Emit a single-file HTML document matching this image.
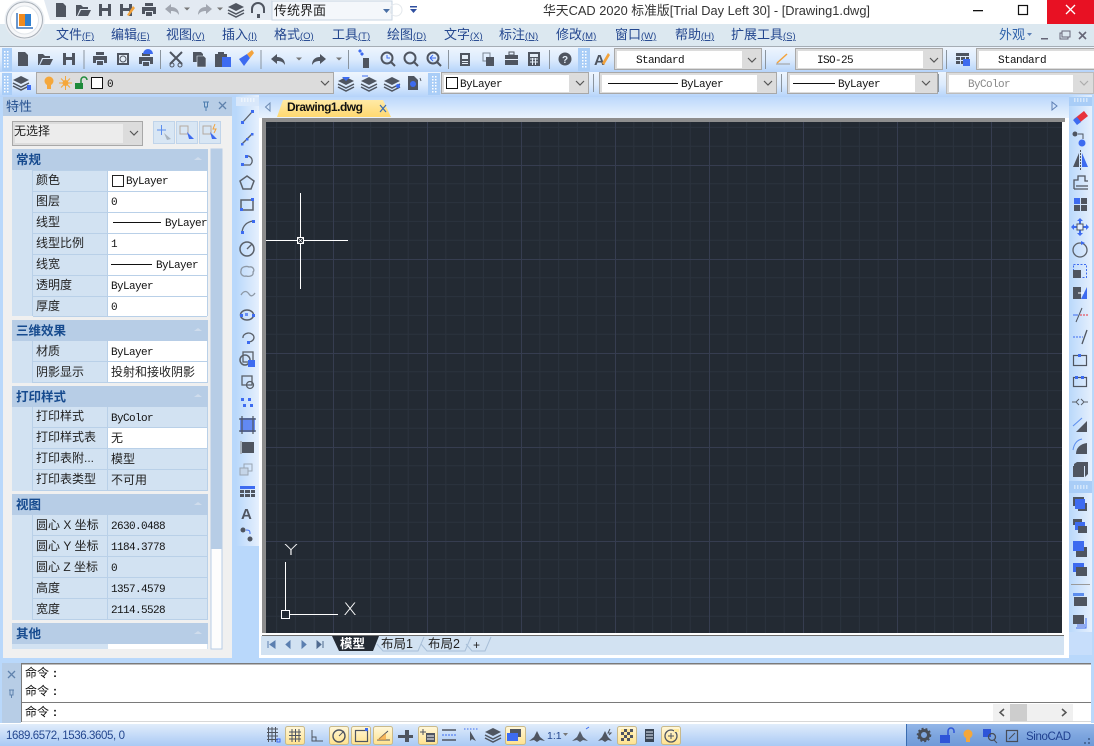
<!DOCTYPE html>
<html><head><meta charset="utf-8"><style>
html,body{margin:0;padding:0;width:1094px;height:746px;overflow:hidden;background:#b9d8fb}
svg{display:block}
text{font-family:"Liberation Sans","Noto Sans CJK SC",sans-serif;white-space:pre}
.m{font-family:"Liberation Mono","Noto Sans CJK SC",monospace;font-size:11px;letter-spacing:-.6px;fill:#111}
.c{font-size:12px;fill:#222}
.h{font-size:12.5px;font-weight:700;fill:#164a8e}
.n{font-size:13px;fill:#24478f}
.k{font-size:9.5px;fill:#24478f;text-decoration:underline}
.i{fill:#4f5560}
.b{fill:#3d6bf0}
.l{fill:none;stroke:#4f5560;stroke-width:1.5}
.bl{fill:none;stroke:#3d6bf0;stroke-width:1}
.u{font-family:"DejaVu Sans","Liberation Sans",sans-serif;font-weight:200;fill:#fff}
</style></head><body>
<svg width="1094" height="746" viewBox="0 0 1094 746" xmlns="http://www.w3.org/2000/svg">
<defs>
<linearGradient id="tb" x1="0" y1="0" x2="0" y2="1"><stop offset="0" stop-color="#eef5fd"/><stop offset=".5" stop-color="#dcebfd"/><stop offset="1" stop-color="#b5d3fa"/></linearGradient>
<linearGradient id="tr" x1="0" y1="0" x2="0" y2="1"><stop offset="0" stop-color="#bcd8fb"/><stop offset="1" stop-color="#eaf3fd"/></linearGradient>
<linearGradient id="vt" x1="0" y1="0" x2="1" y2="0"><stop offset="0" stop-color="#b9d8fb"/><stop offset="1" stop-color="#e6f0fd"/></linearGradient>
<linearGradient id="st" x1="0" y1="0" x2="0" y2="1"><stop offset="0" stop-color="#e3eefb"/><stop offset=".5" stop-color="#c6dcf8"/><stop offset="1" stop-color="#a9c9f4"/></linearGradient>
<linearGradient id="st2" x1="0" y1="0" x2="0" y2="1"><stop offset="0" stop-color="#94b7e8"/><stop offset=".5" stop-color="#7ea6df"/><stop offset="1" stop-color="#6f9ad8"/></linearGradient>
<linearGradient id="yb" x1="0" y1="0" x2="0" y2="1"><stop offset="0" stop-color="#fff8dc"/><stop offset="1" stop-color="#ffe28c"/></linearGradient>
<linearGradient id="tab" x1="0" y1="0" x2="0" y2="1"><stop offset="0" stop-color="#ffeaa6"/><stop offset="1" stop-color="#ffd970"/></linearGradient>
<pattern id="grid" patternUnits="userSpaceOnUse" x="333" y="165" width="94" height="94">
<path d="M18.8 0V94M37.6 0V94M56.4 0V94M75.2 0V94M0 18.8H94M0 37.6H94M0 56.4H94M0 75.2H94" stroke="#2b333e" stroke-width="1" fill="none"/>
<path d="M.5 0V94M0 .5H94" stroke="#363d50" stroke-width="1" fill="none"/>
</pattern>
<g id="file"><path class="i" d="M-5-7H2L5-4V7H-5Z"/></g>
<g id="open"><path class="i" d="M-7 6V-5H-2L0-3H5V-1H-3L-6 6ZM-5 6L-2 0H8L5 6Z"/></g>
<g id="save"><path class="i" d="M-6-6H6V6H-6ZM-3-6V-2H3V-6ZM-3 1V6H3V1Z" fill-rule="evenodd"/></g>
<g id="print"><path class="i" d="M-4-7H4V-4H-4ZM-7-3H7V4H4V1H-4V4H-7ZM-3 2H3V6H-3Z"/></g>
<g id="undo"><path class="i" d="M-7-1L-1-6V-3C4-3 7 0 7 5C5 2 3 1-1 1V4Z"/></g>
<g id="redo"><path class="i" d="M7-1L1-6V-3C-4-3-7 0-7 5C-5 2-3 1 1 1V4Z"/></g>
<g id="layers"><path class="i" d="M0-7L8-3L0 1L-8-3Z"/><path class="l" d="M-8 0L0 4L8 0M-8 3L0 7L8 3"/></g>
<path id="chev" d="M-4-2L0 2L4-2" fill="none" stroke="#555" stroke-width="1.2"/>
<path id="tri" d="M-3-1.5H3L0 1.5Z" fill="#777"/>
<g id="grip" fill="#fff"><rect x="-1" y="-8" width="1.5" height="1.5"/><rect x="-1" y="-5" width="1.5" height="1.5"/><rect x="-1" y="-2" width="1.5" height="1.5"/><rect x="-1" y="1" width="1.5" height="1.5"/><rect x="-1" y="4" width="1.5" height="1.5"/><rect x="-1" y="7" width="1.5" height="1.5"/><rect x="2" y="-8" width="1.5" height="1.5"/><rect x="2" y="-5" width="1.5" height="1.5"/><rect x="2" y="-2" width="1.5" height="1.5"/><rect x="2" y="1" width="1.5" height="1.5"/><rect x="2" y="4" width="1.5" height="1.5"/><rect x="2" y="7" width="1.5" height="1.5"/></g>
<g id="hgrip" fill="#fff"><rect x="-7" y="-1.5" width="1.5" height="1"/><rect x="-4" y="-1.5" width="1.5" height="1"/><rect x="-1" y="-1.5" width="1.5" height="1"/><rect x="2" y="-1.5" width="1.5" height="1"/><rect x="5" y="-1.5" width="1.5" height="1"/><rect x="-7" y=".5" width="1.5" height="1"/><rect x="-4" y=".5" width="1.5" height="1"/><rect x="-1" y=".5" width="1.5" height="1"/><rect x="2" y=".5" width="1.5" height="1"/><rect x="5" y=".5" width="1.5" height="1"/></g>
</defs>

<!-- base -->
<rect width="1094" height="746" fill="#b9d8fb"/>
<rect x="0" y="0" width="1094" height="24" fill="#fff"/>
<rect x="0" y="24" width="1094" height="22" fill="#dce8f0"/>
<rect x="0" y="46" width="1094" height="1" fill="#a5adb5"/>
<rect x="0" y="47" width="1094" height="25" fill="url(#tb)"/>
<rect x="0" y="72" width="1094" height="25" fill="url(#tb)"/>

<!-- QAT -->
<path d="M44 0H272V20H50Z" fill="#e3eaf2"/>
<rect x="272" y="1" width="120" height="19" fill="#f4f7fb" stroke="#c6d3e2"/>
<text x="274" y="15" style="font-size:13px;fill:#222">传统界面</text>
<path d="M383 9H390L386.500 13Z" fill="#4a6fa5"/>
<circle cx="396" cy="10" r="6" fill="none" stroke="#e4e8ec"/>
<rect x="410" y="6" width="7" height="1.500" fill="#2f4f9f"/><path d="M410 9H417L413.500 13Z" fill="#2f4f9f"/>
<use href="#file" x="61" y="10"/><use href="#open" x="83" y="10"/><use href="#save" x="105" y="10"/>
<use href="#save" x="126" y="10"/><path d="M127 15L133 6L135 8L129 16Z" fill="#f3a33c"/>
<use href="#print" x="149" y="10"/>
<use href="#undo" x="172" y="10" opacity=".45"/><use href="#tri" x="187" y="9"/>
<use href="#redo" x="205" y="10" opacity=".45"/><use href="#tri" x="220" y="9"/>
<use href="#layers" x="236" y="10"/>
<path d="M252 13V9A6 6 0 0 1 264 9V13" fill="none" stroke="#4f5560" stroke-width="2"/><rect x="257" y="14" width="3" height="4" fill="#4f5560"/>

<!-- logo -->
<circle cx="24.500" cy="20" r="20" fill="#e9edf2"/>
<circle cx="24.500" cy="20" r="18" fill="#f6f7f9" stroke="#a9b0b8"/>
<circle cx="24.500" cy="20" r="14" fill="#fff" stroke="#e1e5ea"/>
<rect x="19" y="14" width="6" height="12" fill="#f08a1d"/><rect x="25" y="14" width="6" height="12" fill="#2f7fd0"/><path d="M17 13V28H33" fill="none" stroke="#3b77bd" stroke-width="1.500"/>

<!-- title -->
<text x="543" y="15" textLength="327" lengthAdjust="spacingAndGlyphs" style="font-size:13px;fill:#333">华天CAD 2020 标准版[Trial Day Left 30] - [Drawing1.dwg]</text>
<rect x="973" y="10" width="10" height="1.300" fill="#111"/>
<rect x="1018.500" y="5.500" width="9" height="9" fill="none" stroke="#111" stroke-width="1.200"/>
<rect x="1047" y="0" width="47" height="24" fill="#e81123"/>
<path d="M1066 5L1075 14M1075 5L1066 14" stroke="#fff" stroke-width="1.300"/>

<!-- menu -->
<text x="56" y="39" class="n">文件</text><text x="82" y="39" class="k">(F)</text>
<text x="111" y="39" class="n">编辑</text><text x="137" y="39" class="k">(E)</text>
<text x="166" y="39" class="n">视图</text><text x="192" y="39" class="k">(V)</text>
<text x="222" y="39" class="n">插入</text><text x="248" y="39" class="k">(I)</text>
<text x="274" y="39" class="n">格式</text><text x="300" y="39" class="k">(O)</text>
<text x="332" y="39" class="n">工具</text><text x="358" y="39" class="k">(T)</text>
<text x="387" y="39" class="n">绘图</text><text x="413" y="39" class="k">(D)</text>
<text x="444" y="39" class="n">文字</text><text x="470" y="39" class="k">(X)</text>
<text x="499" y="39" class="n">标注</text><text x="525" y="39" class="k">(N)</text>
<text x="556" y="39" class="n">修改</text><text x="582" y="39" class="k">(M)</text>
<text x="615" y="39" class="n">窗口</text><text x="641" y="39" class="k">(W)</text>
<text x="675" y="39" class="n">帮助</text><text x="701" y="39" class="k">(H)</text>
<text x="731" y="39" class="n">扩展工具</text><text x="783" y="39" class="k">(S)</text>
<text x="999" y="39" style="font-size:13px;fill:#2f62ab">外观</text><path d="M1027 33H1032L1029.500 36Z" fill="#5a7fb5"/>
<rect x="1041" y="38" width="7" height="1.500" fill="#667"/><rect x="1060" y="33" width="8" height="6" fill="none" stroke="#667"/><rect x="1062" y="31" width="8" height="6" fill="#dce8f0" stroke="#667"/>
<path d="M1079 32L1086 39M1086 32L1079 39" stroke="#667" stroke-width="1.600"/>

<!-- toolbar 1 -->
<rect x="2" y="48" width="10" height="23" fill="#a9cdf7"/><use href="#grip" x="5" y="59" />
<use href="#file" x="23" y="59"/><use href="#open" x="45" y="59"/><use href="#save" x="69" y="59"/>
<rect x="83.500" y="50" width="1" height="19" fill="#8a949e"/>
<use href="#print" x="100" y="59"/>
<rect x="117" y="53" width="12" height="12" fill="#4f5560"/><rect x="119" y="55" width="8" height="8" fill="#e6eff9"/><circle cx="123" cy="59" r="3" fill="none" stroke="#4f5560"/>
<use href="#print" x="146" y="60"/><path d="M143 54A5 5 0 0 1 153 54H143Z" fill="#3d6bf0"/>
<rect x="160" y="50" width="1" height="19" fill="#8a949e"/>
<path d="M170 52L182 64M182 52L170 64" stroke="#4f5560" stroke-width="2"/><circle cx="172" cy="65" r="2" fill="none" stroke="#4f5560"/><circle cx="180" cy="65" r="2" fill="none" stroke="#4f5560"/>
<path class="i" d="M193 52H201L203 54V62H193Z"/><path class="i" d="M197 56H204L206 58V67H197Z" stroke="#e6eff9" stroke-width=".6"/>
<rect x="215" y="54" width="12" height="13" fill="#4f5560"/><rect x="218" y="52" width="6" height="3" fill="#4f5560"/><rect x="222" y="57" width="9" height="10" fill="#3d6bf0"/>
<path d="M239 59L247 54L250 58L244 66Z" fill="#3d6bf0"/><path d="M247 54L252 50L254 53L250 58Z" fill="#f3a33c"/>
<rect x="260.500" y="50" width="1" height="19" fill="#8a949e"/>
<use href="#undo" x="278" y="60"/><use href="#tri" x="299" y="59"/><use href="#redo" x="319" y="60"/><use href="#tri" x="339" y="59"/>
<rect x="348" y="50" width="1" height="19" fill="#8a949e"/>
<path class="i" d="M363 58H369V68H363Z"/><path d="M360 54L362 52L364 54L362 56Z M358 51L360 49L362 51L360 53Z" fill="#3d6bf0"/>
<circle cx="387" cy="58" r="5.500" fill="none" stroke="#4f5560" stroke-width="2"/><path d="M391 62L395 66" stroke="#4f5560" stroke-width="2"/><path d="M387 55V58H390" fill="none" stroke="#3d6bf0"/>
<circle cx="410" cy="58" r="5.500" fill="none" stroke="#4f5560" stroke-width="2"/><path d="M414 62L418 66" stroke="#4f5560" stroke-width="2"/>
<circle cx="433" cy="58" r="5.500" fill="none" stroke="#4f5560" stroke-width="2"/><path d="M437 62L441 66" stroke="#4f5560" stroke-width="2"/><path d="M430 58H436M430 58L433 55M430 58L433 61" stroke="#3d6bf0" fill="none"/>
<rect x="448" y="50" width="1" height="19" fill="#8a949e"/>
<rect x="460" y="53" width="10" height="13" fill="#4f5560"/><rect x="462" y="55" width="6" height="4" fill="#e6eff9"/><rect x="462" y="61" width="6" height="1" fill="#e6eff9"/><rect x="462" y="63" width="6" height="1" fill="#e6eff9"/>
<rect x="483" y="53" width="7" height="8" fill="none" stroke="#7a8592"/><rect x="486" y="57" width="8" height="9" fill="#4f5560"/>
<rect x="505" y="55" width="13" height="10" fill="#4f5560"/><rect x="509" y="52" width="5" height="3" fill="none" stroke="#4f5560"/><rect x="505" y="59" width="13" height="1" fill="#e6eff9"/>
<rect x="528" y="52" width="12" height="14" fill="#4f5560"/><rect x="530" y="54" width="8" height="3" fill="#e6eff9"/><path d="M530 59H538M530 62H538M532.500 58V65M535.500 58V65" stroke="#e6eff9"/>
<rect x="549" y="50" width="1" height="19" fill="#8a949e"/>
<circle cx="565" cy="59" r="6.500" fill="#4f5560"/><text x="562" y="63" style="font-size:10px;font-weight:700;fill:#e6eff9">?</text>
<rect x="578" y="48" width="12" height="23" fill="#a9cdf7"/><use href="#grip" x="583" y="59"/>
<text x="594" y="65" style="font-size:15px;font-weight:700;fill:#4f5560">A</text><path d="M602 63L608 53L610 55L604 65Z" fill="#f3a33c"/>

<!-- combos row 1 -->
<rect x="614.500" y="48.500" width="147" height="21" fill="#dcdcdc" stroke="#a8a8a8"/><rect x="617" y="51" width="125" height="17" fill="#fff"/><use href="#chev" x="752" y="60"/>
<text x="636" y="63" class="m">Standard</text>
<rect x="765" y="50" width="1" height="19" fill="#8a949e"/>
<path d="M776 64H790" stroke="#9a9a9a"/><path d="M777 63L787 54" stroke="#f3a33c" stroke-width="1.500"/>
<rect x="795.500" y="48.500" width="147" height="21" fill="#dcdcdc" stroke="#a8a8a8"/><rect x="798" y="51" width="125" height="17" fill="#fff"/><use href="#chev" x="934" y="60"/>
<text x="817" y="63" class="m">ISO-25</text>
<rect x="946" y="50" width="1" height="19" fill="#8a949e"/>
<rect x="956" y="53" width="13" height="3" fill="#4f5560"/><path d="M956 57H960V60H956ZM961 57H965V60H961ZM966 57H969V60H966ZM956 61H960V64H956ZM961 61H965V64H961Z" fill="#4f5560"/><rect x="963" y="59" width="7" height="7" fill="#3d6bf0"/>
<rect x="976.500" y="48.500" width="118" height="21" fill="#dcdcdc" stroke="#a8a8a8"/><rect x="979" y="51" width="115" height="17" fill="#fff"/>
<text x="998" y="63" class="m">Standard</text>

<!-- toolbar 2 -->
<rect x="2" y="73" width="10" height="22" fill="#a9cdf7"/><use href="#grip" x="5" y="84"/>
<use href="#layers" x="21" y="83"/><rect x="27" y="85" width="4" height="5" fill="#3d6bf0"/>
<rect x="36.500" y="72.500" width="297" height="21" fill="#dcdcdc" stroke="#a8a8a8"/>
<circle cx="49" cy="81" r="4.500" fill="#f5a73a"/><rect x="47" y="85" width="4" height="4" fill="#f5a73a"/>
<circle cx="65.500" cy="83" r="3" fill="#f5a73a"/><path d="M65.500 76V90M59 83H72M61 78.500L70 87.500M70 78.500L61 87.500" stroke="#f5a73a"/>
<rect x="75" y="83" width="8" height="6" fill="#1d8a3a"/><path d="M81 83V80A3 3 0 0 1 87 80" fill="none" stroke="#1d8a3a" stroke-width="1.500"/>
<rect x="91.500" y="77.500" width="11" height="11" fill="#fff" stroke="#111"/>
<text x="107" y="87" class="m">0</text>
<use href="#chev" x="325" y="83"/>
<use href="#layers" x="346" y="84"/><path d="M342 77H350L346 81Z" fill="#3d6bf0"/>
<use href="#layers" x="369" y="84"/><path d="M362 76H368" stroke="#3d6bf0"/>
<use href="#layers" x="392" y="84"/><circle cx="398" cy="86" r="2" fill="#3d6bf0"/>
<path class="i" d="M408 76H414L418 80V90H408Z"/><circle cx="413" cy="84" r="3" fill="#3d6bf0"/><path d="M420 78L421 81" stroke="#4f5560"/>
<rect x="428" y="73" width="12" height="22" fill="#a9cdf7"/><use href="#grip" x="433" y="84"/>
<rect x="441.500" y="72.500" width="147" height="21" fill="#dcdcdc" stroke="#a8a8a8"/><rect x="444" y="75" width="125" height="17" fill="#fff"/>
<rect x="446.500" y="77.500" width="11" height="11" fill="#fff" stroke="#111"/><text x="460" y="87" class="m">ByLayer</text><use href="#chev" x="580" y="83"/>
<rect x="593" y="74" width="1" height="18" fill="#8a949e"/>
<rect x="599.500" y="72.500" width="177" height="21" fill="#dcdcdc" stroke="#a8a8a8"/><rect x="602" y="75" width="155" height="17" fill="#fff"/>
<path d="M608 83.500H678" stroke="#111"/><text x="681" y="87" class="m">ByLayer</text><use href="#chev" x="768" y="83"/>
<rect x="781" y="74" width="1" height="18" fill="#8a949e"/>
<rect x="787.500" y="72.500" width="150" height="21" fill="#dcdcdc" stroke="#a8a8a8"/><rect x="790" y="75" width="125" height="17" fill="#fff"/>
<path d="M793 83.500H835" stroke="#111"/><text x="838" y="87" class="m">ByLayer</text><use href="#chev" x="926" y="83"/>
<rect x="938" y="74" width="1" height="18" fill="#8a949e"/>
<rect x="946.500" y="72.500" width="147" height="21" fill="#dcdcdc" stroke="#bcbcbc"/><rect x="949" y="75" width="124" height="17" fill="#fff"/>
<text x="968" y="87" class="m" style="fill:#888">ByColor</text><use href="#chev" x="1084" y="83" opacity=".35"/>

<!-- properties panel -->
<rect x="3" y="116" width="229" height="542" fill="#f0f0f0"/>
<rect x="3" y="97" width="229" height="19" fill="#b7cde6"/>
<text x="6" y="111" style="font-size:13px;fill:#24508f">特性</text>
<path d="M203 102H209M204.500 102V107H207.500V102M206 107V111" stroke="#4f7fb0" fill="none"/>
<path d="M219 102L226 109M226 102L219 109" stroke="#5f82ad" stroke-width="1.300"/>
<rect x="12.500" y="121.500" width="130" height="24" fill="#dcdcdc" stroke="#a8a8a8"/><rect x="15" y="124" width="108" height="19" fill="#ececec"/>
<text x="14" y="135" class="c">无选择</text><use href="#chev" x="134" y="133"/>
<rect x="153.500" y="121.500" width="21" height="22" fill="#d8e6f4" stroke="#c0d4ea"/><rect x="176.500" y="121.500" width="21" height="22" fill="#d8e6f4" stroke="#c0d4ea"/><rect x="199.500" y="121.500" width="21" height="22" fill="#d8e6f4" stroke="#c0d4ea"/>
<path d="M157 130H166M161.500 125V135" stroke="#5b8dee"/><path d="M164 133L171 139L167 140Z" fill="#a9b4bf"/>
<rect x="180" y="126" width="8" height="8" fill="none" stroke="#b5a9a0"/><path d="M187 132L194 139L189 139Z" fill="#3d6bf0"/>
<rect x="203" y="126" width="8" height="8" fill="none" stroke="#b5a9a0"/><path d="M210 132L217 139L212 139Z" fill="#3d6bf0"/><path d="M215 124L213 129H216L214 133" stroke="#f3a33c" fill="none"/>

<rect x="211" y="149" width="11" height="500" fill="#fdfdfd" stroke="#b7cde6"/><rect x="211" y="149" width="11" height="400" fill="#b7cde6"/>

<!-- section/rows -->
<g id="sec">
<rect x="12" y="149" width="196" height="500" fill="#f0f0f0"/>
<rect x="12" y="149" width="196" height="21" fill="#b7cde6"/><text x="16" y="164" class="h">常规</text><path d="M194 160H202L198 157Z" fill="#cfdcec"/>
<rect x="12" y="170" width="196" height="146" fill="#d2e2f2"/>
<rect x="108" y="170" width="99" height="146" fill="#fff"/>
<path d="M33 170.500H207M33 191.500H207M33 212.500H207M33 233.500H207M33 254.500H207M33 275.500H207M33 296.500H207M33 316.500H207M32.500 170V316M107.500 170V316M207.500 170V316" stroke="#b9d0e8" fill="none"/>
<text x="36" y="184" class="c">颜色</text><text x="36" y="205" class="c">图层</text><text x="36" y="226" class="c">线型</text><text x="36" y="247" class="c">线型比例</text><text x="36" y="268" class="c">线宽</text><text x="36" y="289" class="c">透明度</text><text x="36" y="310" class="c">厚度</text>
<rect x="112.500" y="175.500" width="11" height="11" fill="#fff" stroke="#222"/><text x="126" y="184" class="m">ByLayer</text>
<text x="111" y="205" class="m">0</text>
<path d="M113 222.500H161" stroke="#111"/><text x="165" y="226" class="m">ByLayer</text>
<text x="111" y="247" class="m">1</text>
<path d="M111 264.500H152" stroke="#111"/><text x="156" y="268" class="m">ByLayer</text>
<text x="111" y="289" class="m">ByLayer</text>
<text x="111" y="310" class="m">0</text>

<rect x="12" y="320" width="196" height="21" fill="#b7cde6"/><text x="16" y="335" class="h">三维效果</text><path d="M194 331H202L198 328Z" fill="#cfdcec"/>
<rect x="12" y="341" width="196" height="42" fill="#d2e2f2"/><rect x="108" y="341" width="99" height="42" fill="#fff"/>
<path d="M33 361.500H207M33 382.500H207M32.500 341V383M107.500 341V383M207.500 341V383" stroke="#b9d0e8" fill="none"/>
<text x="36" y="355" class="c">材质</text><text x="36" y="376" class="c">阴影显示</text>
<text x="111" y="355" class="m">ByLayer</text><text x="111" y="376" class="c">投射和接收阴影</text>

<rect x="12" y="386" width="196" height="21" fill="#b7cde6"/><text x="16" y="401" class="h">打印样式</text><path d="M194 397H202L198 394Z" fill="#cfdcec"/>
<rect x="12" y="407" width="196" height="84" fill="#d2e2f2"/><rect x="108" y="428" width="99" height="21" fill="#fff"/>
<path d="M33 427.500H207M33 448.500H207M33 469.500H207M33 490.500H207M32.500 407V491M107.500 407V491M207.500 407V491" stroke="#b9d0e8" fill="none"/>
<text x="36" y="420" class="c">打印样式</text><text x="36" y="441" class="c">打印样式表</text><text x="36" y="462" class="c">打印表附...</text><text x="36" y="483" class="c">打印表类型</text>
<text x="111" y="421" class="m">ByColor</text><text x="111" y="442" class="c">无</text><text x="111" y="463" class="c">模型</text><text x="111" y="484" class="c">不可用</text>

<rect x="12" y="494" width="196" height="21" fill="#b7cde6"/><text x="16" y="509" class="h">视图</text><path d="M194 505H202L198 502Z" fill="#cfdcec"/>
<rect x="12" y="515" width="196" height="105" fill="#d2e2f2"/>
<path d="M33 535.500H207M33 556.500H207M33 577.500H207M33 598.500H207M33 619.500H207M32.500 515V620M107.500 515V620M207.500 515V620" stroke="#b9d0e8" fill="none"/>
<text x="36" y="529" class="c">圆心 X 坐标</text><text x="36" y="550" class="c">圆心 Y 坐标</text><text x="36" y="571" class="c">圆心 Z 坐标</text><text x="36" y="592" class="c">高度</text><text x="36" y="613" class="c">宽度</text>
<text x="111" y="529" class="m">2630.0488</text><text x="111" y="550" class="m">1184.3778</text><text x="111" y="571" class="m">0</text><text x="111" y="592" class="m">1357.4579</text><text x="111" y="613" class="m">2114.5528</text>

<rect x="12" y="623" width="196" height="21" fill="#b7cde6"/><text x="16" y="638" class="h">其他</text><path d="M194 634H202L198 631Z" fill="#cfdcec"/>
<rect x="12" y="644" width="196" height="5" fill="#d2e2f2"/><rect x="108" y="644" width="99" height="5" fill="#fff"/>
</g>

<!-- left tools -->
<rect x="236" y="95" width="23" height="451" fill="url(#vt)"/>
<rect x="236" y="97" width="23" height="9" fill="#d9e8fb"/><use href="#hgrip" x="248" y="100"/>
<g fill="none" stroke="#5a6069" stroke-width="1.300">
<path d="M242 123L252 112"/><path d="M242 144L252 134"/><path d="M243 165H250A5 5 0 0 0 246 156"/>
<path d="M247 176L254 181L251 189H243L240 181Z" stroke-width="1.500"/>
<rect x="241" y="200" width="12" height="10" stroke-width="1.500"/>
<path d="M242 232C243 225 247 222 253 221"/>
<circle cx="247" cy="249" r="7" stroke-width="1.500"/><path d="M247 249L252 244"/>
<path d="M241 271C241 266 247 266 249 267C253 266 255 270 253 272C254 276 249 277 246 276C243 277 240 274 241 271Z" stroke="#8d98a5"/>
<path d="M241 295C244 290 247 291 249 294C251 297 253 296 255 293" stroke="#8d98a5"/>
<ellipse cx="247" cy="315" rx="6.500" ry="5" stroke-width="1.500"/>
<path d="M243 338A5.500 4.500 0 1 1 249 342"/>
<circle cx="245" cy="360" r="5" stroke-width="1.500"/><rect x="243" y="352" width="10" height="10"/>
<rect x="242" y="376" width="10" height="9"/><circle cx="250" cy="385" r="3.500"/>
</g>
<rect x="248" y="360" width="7" height="7" fill="#3d6bf0"/>
<g fill="#3d6bf0">
<rect x="241" y="121" width="3" height="3"/><rect x="251" y="110" width="3" height="3"/><rect x="241" y="143" width="2.500" height="2.500"/><rect x="246" y="138" width="2.500" height="2.500"/><rect x="251" y="133" width="2.500" height="2.500"/><rect x="241" y="163" width="3" height="3"/><rect x="245" y="155" width="3" height="3"/>
<rect x="251" y="198" width="3" height="3"/><rect x="240" y="208" width="3" height="3"/><rect x="241" y="231" width="3" height="3"/><rect x="252" y="220" width="3" height="3"/><rect x="245" y="313" width="3" height="3" opacity=".7"/><rect x="240" y="314" width="3" height="3"/><rect x="252" y="314" width="3" height="3"/><rect x="247" y="341" width="3" height="3"/>
<rect x="241" y="398" width="3" height="3"/><rect x="248" y="398" width="3" height="3"/><rect x="243" y="404" width="3" height="3"/><rect x="250" y="404" width="3" height="3"/>
</g>
<rect x="240" y="418" width="15" height="14" fill="#3d6bf0" opacity=".75"/><path d="M242 416V434M253 416V434M239 419H256M239 431H256" stroke="#4f5560" stroke-width="1.200"/>
<rect x="242" y="442" width="12" height="11" fill="#4f5560"/><rect x="240" y="441" width="2" height="13" fill="#a7b2bf"/>
<rect x="244" y="464" width="8" height="7" fill="none" stroke="#9aa5b2"/><rect x="240" y="468" width="8" height="7" fill="#c5d5e8" stroke="#9aa5b2"/>
<rect x="240" y="486" width="15" height="3" fill="#3d6bf0"/><path d="M240 490H244V493H240ZM245 490H250V493H245ZM251 490H255V493H251ZM240 494H244V497H240ZM245 494H250V497H245ZM251 494H255V497H251Z" fill="#4f5560"/>
<text x="241" y="519" style="font-size:15px;font-weight:700;fill:#4f5560">A</text>
<circle cx="243" cy="530" r="2.500" fill="#4f5560"/><circle cx="250" cy="539" r="2.500" fill="#4f5560"/><path d="M246 530C250 530 250 531 250 534" fill="none" stroke="#3d6bf0"/>

<!-- document frame -->
<rect x="259" y="118" width="810" height="540" fill="#fff"/>
<rect x="259" y="97" width="810" height="21" fill="url(#tr)"/>
<path d="M270 103L265.500 107L270 111Z" fill="none" stroke="#6d8bb3"/>
<path d="M1052 102L1057 106L1052 110Z" fill="none" stroke="#5d7fb5"/>
<path d="M277 117L283 100H383L391 117Z" fill="url(#tab)"/>
<text x="287" y="111" textLength="76" style="font-size:12px;font-weight:700;fill:#111">Drawing1.dwg</text>
<path d="M380 105L386 112M386 105L380 112" stroke="#3b6cb0" stroke-width="1.200"/>
<rect x="262" y="118" width="803" height="4" fill="#8e8e8e"/><rect x="262" y="118" width="4" height="517" fill="#8e8e8e"/>
<rect x="266" y="122" width="796" height="511" fill="#232a33"/>
<rect x="266" y="122" width="796" height="511" fill="url(#grid)"/>
<rect x="1062" y="122" width="2" height="513" fill="#fff"/>
<rect x="262" y="633" width="800" height="2" fill="#fff"/>
<rect x="262" y="635" width="802" height="1" fill="#6e6e6e"/>
<rect x="261" y="636" width="803" height="19" fill="#d2e2f2"/>

<!-- crosshair -->
<path d="M266 240.500H348M300.500 193V289" stroke="#fff"/>
<rect x="297.500" y="237.500" width="6" height="6" fill="#232a33" stroke="#fff"/>
<path d="M298 238L303 243M303 238L298 243" stroke="#fff" stroke-width=".6"/>

<!-- UCS -->
<path d="M285.500 562V611M289 614.500H338" stroke="#fff"/>
<rect x="281.500" y="610.500" width="8" height="8" fill="none" stroke="#fff"/>
<text x="343" y="615" class="u" style="font-size:17px" textLength="14" lengthAdjust="spacingAndGlyphs">X</text>
<text x="284" y="555" class="u" style="font-size:15px" textLength="14" lengthAdjust="spacingAndGlyphs">Y</text>

<!-- layout tabs -->
<path d="M268 641V648M275 641L270 644.500L275 648Z" fill="#5b7fb0" stroke="#5b7fb0"/>
<path d="M290 641L286 644.500L290 648Z" fill="#5b7fb0" stroke="#5b7fb0"/>
<path d="M302 641L306 644.500L302 648Z" fill="#5b7fb0" stroke="#5b7fb0"/>
<path d="M317 641L321 644.500L317 648ZM323 641V648" fill="#4f6a8f" stroke="#4f6a8f"/>
<path d="M332 636H379L373 651H339Z" fill="#232a33"/>
<text x="340" y="648" style="font-size:12.500px;font-weight:700;fill:#fff">模型</text>
<path d="M377 644L383 651H418L424 637" fill="none" stroke="#a8bfd8"/>
<text x="381" y="648" style="font-size:12.500px;fill:#222">布局1</text>
<path d="M421 644L427 651H465L471 637" fill="none" stroke="#a8bfd8"/>
<text x="428" y="648" style="font-size:12.500px;fill:#222">布局2</text>
<path d="M466 644L472 651H485L491 637" fill="none" stroke="#a8bfd8"/>
<text x="473" y="649" style="font-size:12px;fill:#222">+</text>

<!-- right tools -->
<rect x="1069" y="95" width="23" height="560" fill="url(#vt)"/>
<rect x="1069" y="97" width="23" height="9" fill="#a9cdf7"/><use href="#hgrip" x="1081" y="100"/>
<path d="M1074 119L1084 111L1088 116L1078 124Z" fill="#e8333c"/><path d="M1073 120L1077 125L1081 122L1077 117Z" fill="#3d6bf0"/>
<circle cx="1075" cy="134" r="2.500" fill="#4f5560"/><circle cx="1082" cy="143" r="3.500" fill="#3d6bf0"/><path d="M1078 134H1083V139" fill="none" stroke="#4f5560"/>
<path d="M1073 167L1079 153V167Z" fill="#4f5560"/><path d="M1082 153L1088 167H1082Z" fill="#3d6bf0"/><path d="M1080.500 150V170" stroke="#4f5560" stroke-dasharray="2 1"/>
<path d="M1074 189V180H1078V176H1085V181H1088M1076 186H1088M1074 189H1088" fill="none" stroke="#4f5560" stroke-width="1.300"/>
<path d="M1081 198H1087V204H1081ZM1074 205H1080V211H1074ZM1081 205H1087V211H1081Z" fill="#4f5560"/><rect x="1074" y="198" width="6" height="6" fill="#3d6bf0"/>
<path d="M1080 219V235M1072 227H1088" stroke="#3d6bf0" stroke-width="2"/><path d="M1077 221L1080 218L1083 221ZM1077 233L1080 236L1083 233ZM1074 224L1071 227L1074 230ZM1086 224L1089 227L1086 230Z" fill="#3d6bf0"/><rect x="1077" y="224" width="6" height="6" fill="#e6f0fd" stroke="#4f5560"/>
<circle cx="1080" cy="250" r="7" fill="none" stroke="#5a6069" stroke-width="1.300"/><path d="M1081 241L1085 243L1081 245Z" fill="#3d6bf0"/>
<rect x="1073.500" y="264.500" width="13" height="13" fill="none" stroke="#3d6bf0" stroke-dasharray="2 1.500"/><rect x="1073" y="270" width="8" height="8" fill="#4f5560"/>
<rect x="1073" y="287" width="8" height="12" fill="#4f5560"/><path d="M1081 299L1087 287V299Z" fill="#3d6bf0"/><path d="M1078 293H1084" stroke="#fff"/>
<path d="M1076 322L1082 308" stroke="#4f5560"/><path d="M1080 315H1088" stroke="#e8333c" stroke-dasharray="2 1"/><path d="M1073 315H1078" stroke="#3d6bf0"/>
<path d="M1082 344L1087 330" stroke="#4f5560" stroke-width="1.300"/><path d="M1073 337H1083" stroke="#3d6bf0" stroke-dasharray="2 1"/>
<rect x="1073.500" y="355.500" width="13" height="10" fill="none" stroke="#4f5560" stroke-width="1.200"/><rect x="1078" y="354" width="3" height="3" fill="#3d6bf0"/>
<rect x="1073.500" y="377.500" width="13" height="9" fill="none" stroke="#4f5560" stroke-width="1.200"/><rect x="1075" y="376" width="3" height="3" fill="#3d6bf0"/><rect x="1081" y="376" width="3" height="3" fill="#3d6bf0"/>
<path d="M1072 402H1076M1084 402H1088M1079 399L1076 402L1079 405M1081 399L1084 402L1081 405" fill="none" stroke="#5a6069"/>
<path d="M1076 432L1087 421V432Z" fill="#4f5560"/><path d="M1073 426L1082 418" stroke="#5b8dee"/>
<path d="M1076 454C1076 448 1080 444 1087 443V454Z" fill="#4f5560"/><path d="M1073 450C1074 444 1077 440 1082 439" fill="none" stroke="#5b8dee"/>
<rect x="1073" y="466" width="11" height="11" fill="#4f5560"/><path d="M1074 464L1077 462H1088V474L1085 477V466H1074Z" fill="#4f5560"/>
<rect x="1069" y="481" width="23" height="12" fill="#a9cdf7"/><use href="#hgrip" x="1081" y="487"/>
<rect x="1073" y="497" width="11" height="9" fill="#4f5560"/><rect x="1078" y="503" width="9" height="8" fill="#4f5560"/><rect x="1075" y="499" width="10" height="10" fill="#3d6bf0"/>
<rect x="1073" y="519" width="9" height="6" fill="#4f5560"/><rect x="1075" y="522" width="10" height="8" fill="#3d6bf0"/><rect x="1078" y="526" width="9" height="7" fill="#4f5560"/>
<rect x="1076" y="547" width="11" height="10" fill="#4f5560"/><rect x="1073" y="541" width="11" height="10" fill="#3d6bf0"/>
<rect x="1073" y="563" width="11" height="9" fill="#3d6bf0"/><rect x="1076" y="567" width="11" height="9" fill="#4f5560"/>
<rect x="1071" y="584" width="19" height="1" fill="#9a9a9a"/>
<rect x="1073" y="593" width="11" height="3" fill="#5b8dee"/><rect x="1074" y="597" width="13" height="9" fill="#4f5560"/>
<rect x="1073" y="615" width="11" height="9" fill="#4f5560"/><path d="M1076 628H1086V618" fill="none" stroke="#3d6bf0"/><rect x="1077" y="624" width="8" height="4" fill="#8ea8ee"/>
<rect x="1069" y="632" width="23" height="23" fill="#c7defb"/>

<!-- command -->
<rect x="2" y="663" width="19" height="60" fill="#b7cde6"/>
<rect x="21" y="663" width="1070" height="60" fill="#fff"/>
<rect x="21" y="663" width="1070" height="1.500" fill="#7a7a7a"/>
<rect x="21" y="663" width="1" height="59" fill="#7a7a7a"/>
<rect x="22" y="702" width="1069" height="1" fill="#7a7a7a"/>
<rect x="22" y="721" width="1069" height="1" fill="#d8d8d8"/>
<path d="M8 671L15 678M15 671L8 678" stroke="#5f82ad" stroke-width="1.300"/>
<path d="M9 690H14M10 690V695H13V690M11.500 695V698" stroke="#5f82ad" fill="none"/>
<text x="25" y="677" class="c" style="fill:#111">命令</text><text x="53" y="677" style="font-size:12px;font-weight:700;fill:#111">:</text>
<text x="25" y="695" class="c" style="fill:#111">命令</text><text x="53" y="695" style="font-size:12px;font-weight:700;fill:#111">:</text>
<text x="25" y="716" class="c" style="fill:#111">命令</text><text x="53" y="716" style="font-size:12px;font-weight:700;fill:#111">:</text>
<rect x="993" y="704" width="80" height="17" fill="#f0f0f0"/><rect x="1010" y="704" width="17" height="17" fill="#cdcdcd"/>
<path d="M1004 709L1000 712.500L1004 716M1062 709L1066 712.500L1062 716" fill="none" stroke="#555" stroke-width="1.500"/>

<!-- status bar -->
<rect x="0" y="723" width="1094" height="23" fill="url(#st)"/>
<rect x="0" y="723" width="1094" height="1" fill="#fff"/>
<rect x="907" y="724" width="187" height="22" fill="url(#st2)"/>
<rect x="906" y="724" width="1" height="22" fill="#3a6cb0"/>
<text x="6" y="739" textLength="119" style="font-size:11.500px;fill:#24478f">1689.6572, 1536.3605, 0</text>
<path d="M267 729H278M267 732.500H278M267 736H278M267 739.500H278M268.500 727V742M272 727V742M275.500 727V742" stroke="#4f5560" fill="none"/><rect x="277" y="739" width="3" height="3" fill="none" stroke="#3d6bf0"/>
<g fill="url(#yb)" stroke="#c9b98a"><rect x="285.500" y="726.500" width="19" height="18" rx="2"/><rect x="329.500" y="726.500" width="19" height="18" rx="2"/><rect x="351.500" y="726.500" width="19" height="18" rx="2"/><rect x="373.500" y="726.500" width="19" height="18" rx="2"/><rect x="418.500" y="726.500" width="19" height="18" rx="2"/><rect x="617.500" y="726.500" width="19" height="18" rx="2"/><rect x="661.500" y="726.500" width="19" height="18" rx="2"/></g>
<path d="M289 732H301M289 735.500H301M289 739H301M292 729V742M295.500 729V742M299 729V742" stroke="#4f5560" fill="none"/>
<path d="M312 730V741H323M312 737H316V741" stroke="#4f5560" fill="none"/>
<circle cx="339" cy="736" r="6" fill="none" stroke="#4f5560" stroke-width="1.400"/><path d="M339 736L344 731" stroke="#4f5560"/>
<rect x="355.500" y="730.500" width="12" height="11" fill="none" stroke="#4f5560" stroke-width="1.200"/><rect x="365" y="728" width="3" height="3" fill="#3d6bf0"/>
<path d="M377 740H390M379 739L388 731" stroke="#4f5560" fill="none"/><path d="M377 740L386 733V740Z" fill="#f3a33c" opacity=".7"/>
<path d="M398 735H405V730H409V735H413V738H409V742H405V738H398Z" fill="#4f5560"/>
<path d="M423 729V735M420 732H426" stroke="#4f5560"/><rect x="426" y="733" width="9" height="9" fill="#4f5560"/><path d="M427 736H434M427 739H434" stroke="#fff"/>
<path d="M442 730H456M442 740H456" stroke="#4f5560" stroke-width="1.500"/><path d="M442 735H456" stroke="#3d6bf0" stroke-dasharray="2 1"/>
<path d="M464 729H478" stroke="#3d6bf0" stroke-dasharray="1.500 1.500"/><path d="M470 731L476 741L472 739L470 741Z" fill="#4f5560"/>
<use href="#layers" x="493" y="735"/><rect x="505.500" y="726.500" width="20" height="18" rx="2" fill="url(#yb)" stroke="#c9b98a"/>
<rect x="510" y="729" width="11" height="8" fill="#4f5560"/><rect x="507" y="733" width="11" height="8" fill="#3d6bf0"/>
<path d="M537 731L540 737L545 741L540 740L537 742L534 740L529 741L534 737Z" fill="#4f5560"/>
<text x="547" y="739" style="font-size:10.500px;fill:#24478f">1:1</text><path d="M563 733H568L565.500 736Z" fill="#777"/>
<path d="M577 731L580 737L585 741L580 740L577 742L574 740L569 741L574 737Z" fill="#4f5560" opacity=".95" transform="translate(3 0)"/><path d="M586 729L589 727" stroke="#3d6bf0"/>
<path d="M605 731L608 737L612 741L608 740L605 742L602 740L598 741L602 737Z" fill="#4f5560"/><path d="M610 729L608 733H611L609 735" stroke="#4f5560" fill="none"/>
<rect x="621" y="729" width="12" height="12" fill="#4f5560"/><path d="M621 729H624V732H621ZM627 729H630V732H627ZM624 732H627V735H624ZM630 732H633V735H630ZM621 735H624V738H621ZM627 735H630V738H627ZM624 738H627V741H624ZM630 738H633V741H630Z" fill="#ffe99a"/>
<rect x="645" y="729" width="9" height="13" fill="#3a4656"/><path d="M646 732H653M646 735H653M646 738H653" stroke="#e6eff9"/>
<circle cx="671" cy="736" r="6" fill="none" stroke="#4f5560" stroke-width="1.300"/><path d="M668 736H674M671 733V739" stroke="#4f5560"/><rect x="674" y="729" width="5" height="3" fill="#ffe99a"/>
<circle cx="924" cy="735" r="4.500" fill="none" stroke="#474d58" stroke-width="3"/><circle cx="924" cy="735" r="6.500" fill="none" stroke="#474d58" stroke-width="1.500" stroke-dasharray="2 2"/>
<rect x="940" y="735" width="10" height="8" fill="#2e55d8"/><path d="M948 735V731A3 3 0 0 1 954 731V733" fill="none" stroke="#2e55d8" stroke-width="1.500"/>
<circle cx="968" cy="734" r="4.500" fill="#f5a73a"/><rect x="966" y="738" width="4" height="4" fill="#f5a73a"/>
<rect x="983" y="729" width="8" height="8" fill="#2e55d8"/><circle cx="992" cy="737" r="3.500" fill="none" stroke="#474d58" stroke-width="1.300"/><path d="M994 740L997 743" stroke="#474d58"/>
<rect x="1006.500" y="730.500" width="11" height="11" fill="none" stroke="#474d58" stroke-width="1.200"/><path d="M1009 739L1015 733" stroke="#474d58"/>
<text x="1026" y="740" textLength="45" style="font-size:11.500px;fill:#1f3f8f">SinoCAD</text>
<path d="M1088 744H1090V742H1088ZM1084 744H1086V742H1084ZM1088 740H1090V738H1088Z" fill="#4a6a9a"/>
</svg>
</body></html>
